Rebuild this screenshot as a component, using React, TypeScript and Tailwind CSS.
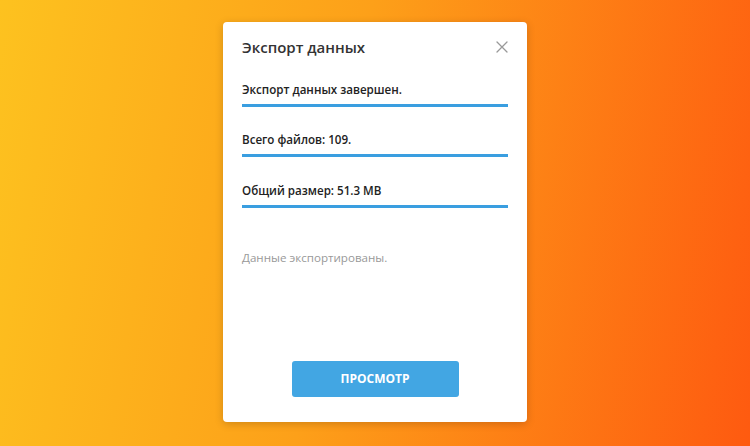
import React from "react";

export default function App() {
  return (
    <div
      className="w-full h-[446px] flex justify-center pt-[22px] bg-[linear-gradient(100deg,#fdc21f_0%,#fda019_45%,#fe5a10_100%)]"
      style={{ fontFamily: '"Open Sans", "Noto Sans", sans-serif' }}
    >
      <div className="w-[304px] h-[400px] bg-white rounded-[4px] shadow-[0_2px_8px_rgba(0,0,0,0.18)] flex flex-col px-[19px]">
        <div className="flex items-center justify-between pt-[14px] h-[36px]">
          <h1 className="text-[15px] leading-[22px] font-semibold text-[#333]">Экспорт данных</h1>
          <button className="w-[14px] h-[14px] flex items-center justify-center text-[#999] mr-[-1px]" aria-label="Закрыть">
            <svg width="12" height="12" viewBox="0 0 12 12" fill="none" stroke="currentColor" strokeWidth="1.3" strokeLinecap="round">
              <path d="M1 1L11 11M11 1L1 11" />
            </svg>
          </button>
        </div>
        <div className="mt-[22px] pb-[4px] border-b-[3px] border-[#3a9ee0] text-[11.6px] leading-[20px] font-semibold text-[#222]">
          Экспорт данных завершен.
        </div>
        <div className="mt-[23px] pb-[4px] border-b-[3px] border-[#3a9ee0] text-[11.6px] leading-[20px] font-semibold text-[#222]">
          Всего файлов: 109.
        </div>
        <div className="mt-[24px] pb-[4px] border-b-[3px] border-[#3a9ee0] text-[11.6px] leading-[20px] font-semibold text-[#222]">
          Общий размер: 51.3 MB
        </div>
        <div className="mt-[40px] text-[11.6px] leading-[20px] text-[#999]">Данные экспортированы.</div>
        <div className="mt-auto mb-[25px] flex justify-center">
          <button className="w-[167px] h-[36px] rounded-[3px] bg-[#42a6e3] text-white text-[12px] font-bold">
            ПРОСМОТР
          </button>
        </div>
      </div>
    </div>
  );
}
